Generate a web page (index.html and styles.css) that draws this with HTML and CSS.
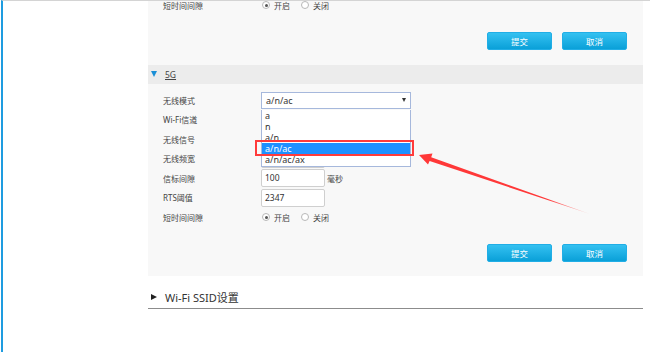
FILE: index.html
```html
<!DOCTYPE html>
<html lang="zh-CN">
<head>
    <meta charset="UTF-8">
    <title>无线设置</title>
    <link rel="stylesheet" href="styles.css">
</head>
<body>

<div class="page">
    <div class="content">
        <div class="panel panel-top">
            <div class="row">
                <span class="label">短时间间隙</span>
                <div class="radios">
                    <span class="radio checked"></span><span class="radio-text">开启</span>
                    <span class="radio"></span><span class="radio-text">关闭</span>
                </div>
            </div>
            <div class="actions">
                <button class="btn">提交</button>
                <button class="btn">取消</button>
            </div>
        </div>

        <div class="band-head">
            <span class="caret-down"></span>
            <a class="band-link">5G</a>
        </div>

        <div class="panel">
            <div class="row">
                <span class="label">无线模式</span>
                <div class="select-wrap">
                    <div class="select">
                        <span>a/n/ac</span>
                        <span class="select-arrow"></span>
                    </div>
                    <ul class="dropdown">
                        <li>a</li>
                        <li>n</li>
                        <li>a/n</li>
                        <li class="active">a/n/ac</li>
                        <li>a/n/ac/ax</li>
                    </ul>
                </div>
            </div>
            <div class="row">
                <span class="label">Wi-Fi信道</span>
                <div class="input"></div>
            </div>
            <div class="row">
                <span class="label">无线信号</span>
                <div class="input"></div>
            </div>
            <div class="row">
                <span class="label">无线频宽</span>
                <div class="input"></div>
            </div>
            <div class="row">
                <span class="label">信标间隙</span>
                <div class="input">100</div>
                <span class="unit">毫秒</span>
            </div>
            <div class="row">
                <span class="label">RTS阈值</span>
                <div class="input">2347</div>
            </div>
            <div class="row">
                <span class="label">短时间间隙</span>
                <div class="radios">
                    <span class="radio checked"></span><span class="radio-text">开启</span>
                    <span class="radio"></span><span class="radio-text">关闭</span>
                </div>
            </div>
            <div class="actions">
                <button class="btn">提交</button>
                <button class="btn">取消</button>
            </div>
        </div>

        <div class="section-title">
            <span class="caret-right"></span>
            Wi-Fi SSID设置
        </div>
    </div>

    <!-- 标注箭头 -->
    <svg class="annot-arrow" width="650" height="352" viewBox="0 0 650 352">
        <defs>
            <linearGradient id="fade" x1="419" y1="154" x2="590" y2="214" gradientUnits="userSpaceOnUse">
                <stop offset="0" stop-color="#ff3838"/>
                <stop offset="0.75" stop-color="#ff3838"/>
                <stop offset="1" stop-color="#ff3838" stop-opacity="0.2"/>
            </linearGradient>
        </defs>
        <polygon points="419,155 432.5,153.5 431.2,157.2 590,214 429.6,161 428,164.5" fill="url(#fade)"/>
    </svg>
</div>

</body>
</html>
```

FILE: styles.css
```css
body {
    margin: 0;
    padding: 0;
    background-color: #fff;
    font-family: "Noto Sans", "Noto Sans CJK SC", sans-serif;
    color: #333;
}
.page {
    position: relative;
    height: 351px;
    margin-left: 1px;
    border-left: 2px solid #1e9ce0;
    border-top: 1px solid #d4d4d4;
    overflow: hidden;
}
.content {
    margin-left: 145px;
    width: 495px;
}
.panel {
    background-color: #f8f8f8;
    padding: 6.75px 0 14px;
}
.panel-top {
    margin-top: -5.75px;
    padding-top: 0;
    padding-bottom: 15px;
}
.row {
    display: flex;
    align-items: center;
    height: 19.5px;
    padding-left: 15px;
}
.label {
    width: 98px;
    font-size: 8px;
    color: #444;
}
.radios {
    display: flex;
    align-items: center;
    padding-left: 1px;
}
.radio {
    width: 6px;
    height: 6px;
    border: 1px solid #b8b8b8;
    border-radius: 50%;
    background-color: #fff;
    position: relative;
}
.radio.checked::after {
    content: "";
    position: absolute;
    left: 1.5px;
    top: 1.5px;
    width: 3px;
    height: 3px;
    border-radius: 50%;
    background-color: #555;
}
.radio-text {
    font-size: 8px;
    color: #444;
    margin-left: 4px;
    margin-right: 11px;
}
.actions {
    display: flex;
    justify-content: flex-end;
    gap: 10px;
    padding-right: 16px;
    margin-top: 17px;
}
.btn {
    width: 65px;
    height: 18px;
    padding: 0;
    border: 1px solid #21aee6;
    border-radius: 2px;
    background: linear-gradient(#34c1f1, #0aa0d8);
    color: #fff;
    font-family: "Noto Sans", "Noto Sans CJK SC", sans-serif;
    font-size: 8.5px;
}
.band-head {
    display: flex;
    align-items: center;
    height: 19px;
    background-color: #ececec;
}
.caret-down {
    width: 0;
    height: 0;
    margin-left: 3px;
    margin-right: 8px;
    border-left: 3.5px solid transparent;
    border-right: 3.5px solid transparent;
    border-top: 6px solid #1a8fd6;
}
.band-link {
    font-size: 8.5px;
    color: #444;
    text-decoration: underline;
}
.select-wrap {
    position: relative;
}
.select {
    display: flex;
    align-items: center;
    justify-content: space-between;
    box-sizing: border-box;
    width: 150px;
    height: 17px;
    padding: 0 4px;
    border: 1px solid #a6b8dc;
    background-color: #fff;
    font-size: 9px;
    color: #333;
}
.select-arrow {
    width: 0;
    height: 0;
    border-left: 2.5px solid transparent;
    border-right: 2.5px solid transparent;
    border-top: 4px solid #333;
}
.dropdown {
    position: absolute;
    top: 18px;
    left: 0;
    z-index: 2;
    box-sizing: border-box;
    width: 150px;
    margin: 0;
    padding: 0 0 1px;
    list-style: none;
    border: 1px solid #a6b8dc;
    border-top: none;
    background-color: #fff;
}
.dropdown li {
    height: 10px;
    padding-top: 1px;
    padding-left: 3px;
    line-height: 10px;
    font-size: 9px;
    color: #333;
}
.dropdown li.active {
    position: relative;
    background-color: #1e90ff;
    color: #fff;
}
.dropdown li.active::after {
    content: "";
    position: absolute;
    left: -7px;
    right: -4px;
    top: -3px;
    bottom: -2px;
    border: 2px solid #ff3b3b;
}
.input {
    box-sizing: border-box;
    width: 64px;
    height: 18px;
    padding: 0 3px;
    border: 1px solid #cfcfcf;
    border-radius: 2px;
    background-color: #fff;
    font-size: 8.5px;
    line-height: 16px;
    color: #333;
}
.unit {
    font-size: 8px;
    color: #444;
    margin-left: 2px;
}
.section-title {
    display: flex;
    align-items: center;
    margin-top: 13px;
    height: 16px;
    padding-bottom: 3px;
    border-bottom: 1px solid #8c8c8c;
    font-size: 11px;
    color: #333;
}
.caret-right {
    width: 0;
    height: 0;
    margin-left: 3px;
    margin-right: 8px;
    border-top: 3.5px solid transparent;
    border-bottom: 3.5px solid transparent;
    border-left: 6px solid #222;
}
.annot-arrow {
    position: absolute;
    left: -3px;
    top: -1px;
    pointer-events: none;
    z-index: 3;
}
```
